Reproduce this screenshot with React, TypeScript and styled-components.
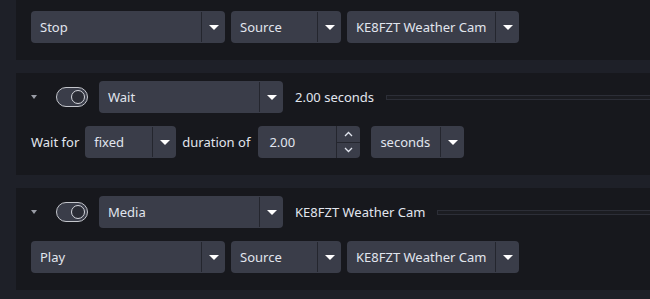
import React from "react";
import styled, { createGlobalStyle } from "styled-components";

const GlobalStyle = createGlobalStyle`
  html, body {
    margin: 0;
    padding: 0;
    background: #1e2028;
    font-family: "Noto Sans", "Open Sans", sans-serif;
    font-size: 13px;
    color: #e1e5ee;
  }
`;

const Page = styled.div`
  display: flex;
  flex-direction: column;
  gap: 13px;
  padding: 0 0 9px 16px;
  height: 299px;
  box-sizing: border-box;
  overflow: hidden;
`;

const Card = styled.div<{ $cut?: boolean }>`
  background: #17181d;
  padding: ${(p) => (p.$cut ? "11px" : "8px")} 0 17px 15px;
  display: flex;
  flex-direction: column;
  gap: 13px;
`;

const Row = styled.div<{ $gap?: number }>`
  display: flex;
  align-items: center;
  gap: ${(p) => p.$gap ?? 6}px;
  height: 32px;
`;

const Caret = styled.div`
  width: 14px;
  display: flex;
  justify-content: flex-start;
  &::before {
    content: "";
    border-left: 3.5px solid transparent;
    border-right: 3.5px solid transparent;
    border-top: 4px solid #9a9ca6;
  }
`;

const Toggle = styled.div`
  width: 32px;
  height: 20px;
  box-sizing: border-box;
  border: 1.5px solid #c4c6cc;
  border-radius: 10px;
  background: #3a3d49;
  display: flex;
  align-items: center;
  justify-content: flex-end;
  padding-right: 2px;
  &::after {
    content: "";
    width: 12px;
    height: 12px;
    border-radius: 50%;
    border: 1.5px solid #d4d6dc;
    background: #2a2c35;
  }
`;

const Select = styled.div<{ $w: number; $ml?: number }>`
  width: ${(p) => p.$w}px;
  height: 32px;
  flex: none;
  display: flex;
  margin-left: ${(p) => p.$ml ?? 0}px;
  background: #3a3d49;
  border-radius: 4px;
  overflow: hidden;
`;

const SelectLabel = styled.div`
  flex: 1;
  display: flex;
  align-items: center;
  padding-left: 9px;
  white-space: nowrap;
`;

const SelectArrow = styled.div`
  width: 23px;
  margin: 1px 0;
  border-left: 1px solid #24262e;
  display: flex;
  align-items: center;
  justify-content: center;
  &::before {
    content: "";
    border-left: 5px solid transparent;
    border-right: 5px solid transparent;
    border-top: 5px solid #ffffff;
  }
`;

const Text = styled.span<{ $ml?: number }>`
  white-space: nowrap;
  margin-left: ${(p) => p.$ml ?? 0}px;
`;

const Track = styled.div`
  flex: 1;
  height: 3px;
  margin-left: 1px;
  border: 1px solid #2c2e37;
  border-right: none;
  background: #1b1c21;
`;

const Spin = styled.div`
  width: 102px;
  height: 32px;
  flex: none;
  display: flex;
  background: #3a3d49;
  border-radius: 4px;
  overflow: hidden;
  margin-left: 2px;
`;

const SpinValue = styled.div`
  flex: 1;
  display: flex;
  align-items: center;
  padding-left: 11px;
`;

const SpinButtons = styled.div`
  width: 23px;
  border-left: 1px solid #24262e;
  display: flex;
  flex-direction: column;
`;

const SpinButton = styled.div<{ $top?: boolean }>`
  flex: 1;
  display: flex;
  align-items: center;
  justify-content: center;
  border-bottom: ${(p) => (p.$top ? "1px solid #24262e" : "none")};
  color: #e1e5ee;
`;

function Dropdown({ label, width, ml }: { label: string; width: number; ml?: number }) {
  return (
    <Select $w={width} $ml={ml}>
      <SelectLabel>{label}</SelectLabel>
      <SelectArrow />
    </Select>
  );
}

function Chevron({ up }: { up?: boolean }) {
  return (
    <svg width="9" height="6" viewBox="0 0 9 6">
      <path
        d={up ? "M1 5 L4.5 1.5 L8 5" : "M1 1 L4.5 4.5 L8 1"}
        fill="none"
        stroke="currentColor"
        strokeWidth="1.3"
      />
    </svg>
  );
}

function SourceRow({ action }: { action: string }) {
  return (
    <Row>
      <Dropdown label={action} width={194} />
      <Dropdown label="Source" width={110} />
      <Dropdown label="KE8FZT Weather Cam" width={172} />
    </Row>
  );
}

function Header({ type, summary }: { type: string; summary: string }) {
  return (
    <Row $gap={11}>
      <Caret />
      <Toggle />
      <Dropdown label={type} width={184} />
      <Text $ml={1}>{summary}</Text>
      <Track />
    </Row>
  );
}

export default function App() {
  return (
    <>
      <GlobalStyle />
      <Page>
        <Card $cut>
          <SourceRow action="Stop" />
        </Card>
        <Card>
          <Header type="Wait" summary="2.00 seconds" />
          <Row>
            <Text>Wait for</Text>
            <Dropdown label="fixed" width={91} />
            <Text>duration of</Text>
            <Spin>
              <SpinValue>2.00</SpinValue>
              <SpinButtons>
                <SpinButton $top>
                  <Chevron up />
                </SpinButton>
                <SpinButton>
                  <Chevron />
                </SpinButton>
              </SpinButtons>
            </Spin>
            <Dropdown label="seconds" width={93} ml={5} />
          </Row>
        </Card>
        <Card>
          <Header type="Media" summary="KE8FZT Weather Cam" />
          <SourceRow action="Play" />
        </Card>
      </Page>
    </>
  );
}
